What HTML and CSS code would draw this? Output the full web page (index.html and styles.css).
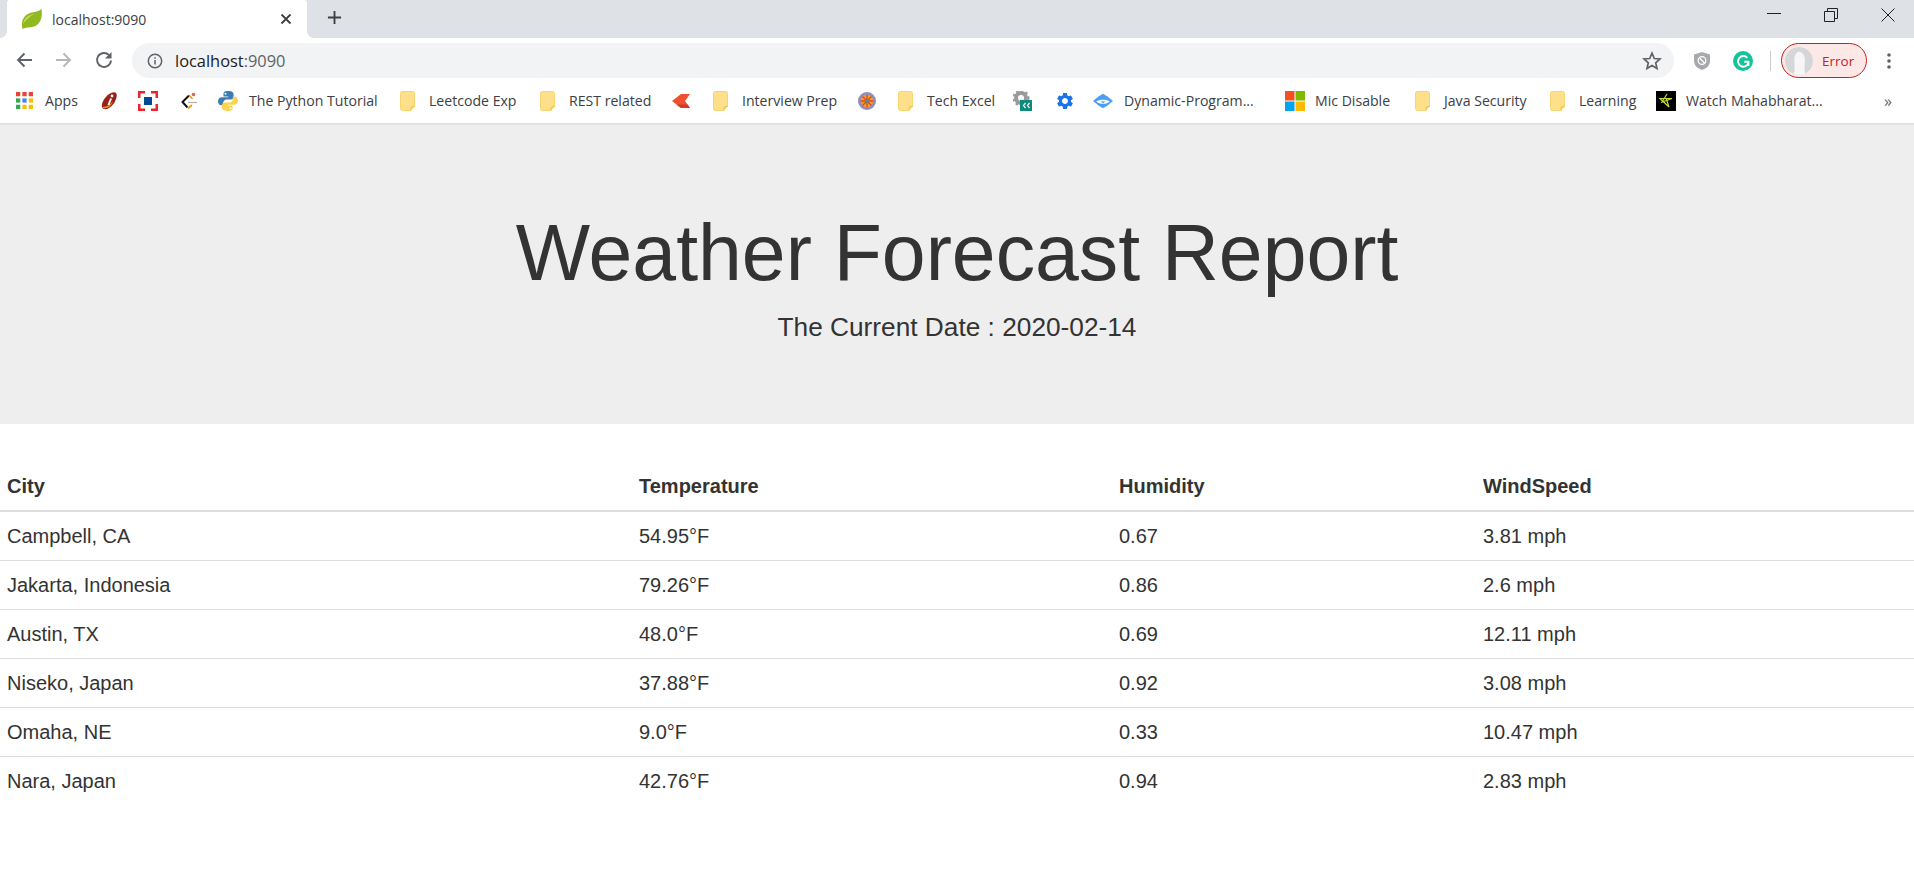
FILE: index.html
```html
<!DOCTYPE html>
<html lang="en">
<head>
<meta charset="utf-8">
<title>localhost:9090</title>
<link rel="stylesheet" href="styles.css">
</head>
<body>
<svg class="defs" aria-hidden="true"><defs><g id="folder-shape"><path d="M2.500.5h10a2 2 0 0 1 2 2v13l-4 4h-8a2 2 0 0 1-2-2v-15a2 2 0 0 1 2-2z" fill="#fee08b" stroke="#f7d470"/><path d="M11 19.500v-3l1-1h2.500" stroke="#eec04e" fill="#fdd663"/></g></defs></svg>
<header class="browser">
  <div class="tabstrip">
    <div class="tab">
      <svg class="favicon" viewBox="0 0 21 20"><path fill="#8fb91f" d="M1.500 20C-1 11 4 5 11 3.500 15 2.700 18.500 2 20.500 0c1.300 8-1 15-7.500 17.500C9 19 5 18 1.500 20z"/><path fill="#c6dc4e" d="M2 15C3 9 7 6 14 4.500 8.500 7.500 5 11 2 15z"/></svg>
      <span class="tab-title">localhost:9090</span>
      <svg class="tab-close" viewBox="0 0 12 12"><path d="M1.500 1.500l9 9m0-9l-9 9" stroke="#3c4043" stroke-width="1.800" fill="none"/></svg>
    </div>
    <svg class="new-tab" viewBox="0 0 16 16"><path d="M8 1v14M1 8h14" stroke="#3c4043" stroke-width="2" fill="none"/></svg>
    <div class="window-controls">
      <svg viewBox="0 0 14 14"><path d="M0 5.500h14" stroke="#222" fill="none"/></svg>
      <svg viewBox="0 0 14 14"><path d="M.5 3.500h10v10H.5zM3.500 3V.5h10v10H11" stroke="#222" fill="none"/></svg>
      <svg viewBox="0 0 14 14"><path d="M.5.500l13 13m0-13l-13 13" stroke="#222" fill="none"/></svg>
    </div>
  </div>
  <div class="toolbar">
    <svg class="nav" viewBox="0 0 18 18"><path d="M17 9H3M9.500 2.500L3 9l6.500 6.500" stroke="#5f6368" stroke-width="1.900" fill="none"/></svg>
    <svg class="nav" viewBox="0 0 18 18"><path d="M1 9h14M8.500 2.500L15 9l-6.500 6.500" stroke="#b4b7bb" stroke-width="1.900" fill="none"/></svg>
    <svg class="nav" viewBox="0 0 18 18"><path d="M16 9.500a7 7 0 1 1-2-5.400" stroke="#5f6368" stroke-width="1.900" fill="none"/><path d="M16.500 1v6.500H10z" fill="#5f6368"/></svg>
    <div class="omnibox">
      <svg class="info" viewBox="0 0 16 16"><circle cx="8" cy="8" r="6.700" stroke="#5f6368" stroke-width="1.500" fill="none"/><path d="M8 7v4.500M8 4.300v1.500" stroke="#5f6368" stroke-width="1.500"/></svg>
      <span class="url">localhost<span class="port">:9090</span></span>
      <svg class="star" viewBox="0 0 20 20"><path d="M10 2.200l2.300 5.300 5.700.5-4.300 3.800 1.300 5.600-5-3-5 3 1.300-5.600L2 8l5.700-.5z" stroke="#5f6368" stroke-width="1.700" fill="none"/></svg>
    </div>
    <svg class="ext shield" viewBox="0 0 18 20"><path d="M9 1l8 2.500V10c0 4.500-3.500 7.500-8 9-4.500-1.500-8-4.500-8-9V3.500z" fill="#a7a9ac"/><circle cx="9" cy="9.500" r="3.800" stroke="#fff" stroke-width="1.300" fill="none"/><path d="M6.500 7l5 5" stroke="#fff" stroke-width="1.300"/></svg>
    <svg class="ext grammarly" viewBox="0 0 20 20"><circle cx="10" cy="10" r="10" fill="#15c39a"/><path d="M14.300 6.800a5.300 5.300 0 1 0 1 5.500M15.500 15v-4.200h-4.300" stroke="#fff" stroke-width="1.900" fill="none"/></svg>
    <div class="divider"></div>
    <div class="profile">
      <span class="avatar"><svg viewBox="0 0 24 24"><circle cx="12" cy="12" r="12" fill="#d5d6d8"/><path d="M7 24c2-4 1-8 1-13 0-4 2-7 4-7s5 2 5 7c0 5-1 9 1 13z" fill="#f6f6f7"/></svg></span>
      <span class="profile-label">Error</span>
    </div>
    <svg class="menu" viewBox="0 0 4 16"><circle cx="2" cy="2" r="1.800"/><circle cx="2" cy="8" r="1.800"/><circle cx="2" cy="14" r="1.800"/></svg>
  </div>
  <nav class="bookmarks">
    <a class="bm w-apps"><svg class="ico" viewBox="0 0 16 16"><rect width="4" height="4" fill="#ea4335"/><rect x="6" width="4" height="4" fill="#ea4335"/><rect x="12" width="4" height="4" fill="#ea4335"/><rect y="6" width="4" height="4" fill="#34a853"/><rect x="6" y="6" width="4" height="4" fill="#4285f4"/><rect x="12" y="6" width="4" height="4" fill="#fbbc05"/><rect y="12" width="4" height="4" fill="#34a853"/><rect x="6" y="12" width="4" height="4" fill="#fbbc05"/><rect x="12" y="12" width="4" height="4" fill="#fbbc05"/></svg><span>Apps</span></a>
    <a class="bm w-icici"><svg class="ico-md" viewBox="0 0 18 18"><path d="M11 1c5-2 7 1 5 6-2 6-7 11-12 10C0 16 2 9 6 5c1-2 3-3 5-4z" fill="#98201a"/><path d="M2 15c1 2 6 2 9-2 1.500-2 2-4 2-4-2 3-6 6-11 6z" fill="#f08a1d"/><path d="M10 6.500L7.500 13h2L12 6.500z" fill="#fff"/><circle cx="12" cy="4" r="1.400" fill="#fff"/></svg></a>
    <a class="bm w-hdfc"><svg class="ico-lg" viewBox="0 0 20 20"><path d="M0 0h7v2.500H2.500V7H0zM13 0h7v7h-2.500V2.500H13zM0 13h2.500v4.500H7V20H0zM17.500 13H20v7h-7v-2.500h4.500z" fill="#ed232a"/><rect x="6" y="6" width="8" height="8" fill="#004c8f"/></svg></a>
    <a class="bm w-c"><svg class="ico-md" viewBox="0 0 18 18"><path d="M9 3.500L2.500 10l5 5.500" stroke="#111" stroke-width="2" fill="none"/><path d="M9 3l3.500 4M8 16.500l4-3.500" stroke="#f09a1a" stroke-width="1.800" fill="none"/><path d="M8 10.500h9" stroke="#b5b5b5" stroke-width="1.300"/><circle cx="13.500" cy="2.500" r="1.800" fill="#d9635f"/></svg></a>
    <a class="bm w-py"><svg class="ico-lg" viewBox="0 0 20 20"><path d="M10 0C6 0 5.500 1.500 5.500 3.500V5.500h4.700v.8H3.500C1.500 6.300 0 8 0 10.300s1.300 4 3.300 4h1.900v-2.600c0-2 1.600-3.300 3.500-3.300h4.300c1.500 0 2.600-1.200 2.600-2.700V3.500C15.600 1.500 14 0 10 0z" fill="#3d7cb0"/><path d="M10 20c4 0 4.500-1.500 4.500-3.500v-2h-4.700v-.8h6.700c2 0 3.500-1.700 3.500-4s-1.300-4-3.300-4h-1.900v2.600c0 2-1.600 3.300-3.500 3.300H6.500c-1.500 0-2.600 1.200-2.600 2.700v2.200C3.900 18.500 6 20 10 20z" fill="#fbd34e"/><circle cx="7.500" cy="2.800" r="1" fill="#fff"/><circle cx="12.500" cy="17.200" r="1" fill="#fff"/></svg><span>The Python Tutorial</span></a>
    <a class="bm w-leet"><svg class="folder" viewBox="0 0 15 20"><use href="#folder-shape"/></svg><span>Leetcode Exp</span></a>
    <a class="bm w-rest"><svg class="folder" viewBox="0 0 15 20"><use href="#folder-shape"/></svg><span>REST related</span></a>
    <a class="bm w-k"><svg class="ico-md" viewBox="0 0 18 14"><path d="M18 0H9L0 7l9 7h9l-5-7z" fill="#f1502f"/><path d="M18 14H9L4.500 10.500H15.500z" fill="#d43a2a"/></svg></a>
    <a class="bm w-prep"><svg class="folder" viewBox="0 0 15 20"><use href="#folder-shape"/></svg><span>Interview Prep</span></a>
    <a class="bm w-wheel"><svg class="ico-md" viewBox="0 0 20 20"><circle cx="10" cy="10" r="8.500" fill="#f0a030" stroke="#8f8cc0" stroke-width="3"/><path d="M10 3v14M3 10h14M5 5l10 10M15 5L5 15" stroke="#d64a2a" stroke-width="1.500"/><circle cx="10" cy="10" r="2" fill="#3f9a96"/></svg></a>
    <a class="bm w-tech"><svg class="folder" viewBox="0 0 15 20"><use href="#folder-shape"/></svg><span>Tech Excel</span></a>
    <a class="bm w-gear"><svg class="ico-lg" viewBox="0 0 20 20"><circle cx="8" cy="7" r="5" fill="none" stroke="#9a9a9a" stroke-width="4"/><circle cx="8" cy="7" r="7.500" fill="none" stroke="#9a9a9a" stroke-width="2" stroke-dasharray="2.500 2.500"/><rect x="7" y="9" width="12" height="11" fill="#0e8a7d"/><path d="M12.500 12l-2 2.500 2 2.500M16.500 12l-2 2.500 2 2.500" stroke="#dff5f0" stroke-width="1.300" fill="none"/></svg></a>
    <a class="bm w-cog"><svg class="ico-lg" viewBox="0 0 24 24"><path fill="#1a73e8" d="M19.140 12.940c.04-.3.060-.61.060-.94 0-.32-.02-.64-.07-.94l2.030-1.580c.18-.14.230-.41.120-.61l-1.920-3.320c-.12-.22-.37-.29-.59-.22l-2.390.960c-.5-.38-1.030-.7-1.620-.94l-.36-2.540c-.04-.24-.24-.41-.48-.41h-3.840c-.24 0-.43.170-.47.410l-.36 2.540c-.59.240-1.130.570-1.620.940l-2.390-.96c-.22-.08-.47 0-.59.220L2.740 8.870c-.12.210-.08.470.120.610l2.030 1.580c-.05.3-.09.630-.09.940s.02.640.070.940l-2.030 1.580c-.18.140-.23.410-.12.610l1.920 3.320c.12.220.37.290.59.220l2.390-.96c.5.380 1.030.7 1.620.94l.36 2.540c.05.240.24.410.48.410h3.840c.24 0 .44-.17.47-.41l.36-2.540c.59-.24 1.130-.56 1.620-.94l2.390.96c.22.080.47 0 .59-.22l1.920-3.320c.12-.22.070-.47-.12-.61l-2.010-1.580zM12 15.600c-1.980 0-3.600-1.620-3.600-3.600s1.620-3.600 3.600-3.600 3.600 1.620 3.600 3.600-1.620 3.600-3.600 3.600z"/></svg></a>
    <a class="bm w-dp"><svg class="ico-lg" viewBox="0 0 22 16"><path d="M11 0l5 3 6 5-6 5-5 3-5-3-6-5 6-5z" fill="#4a9ff5"/><path d="M3.500 8.500C7 6 15 6 18.500 8.500 15 12 7 12 3.500 8.500z" fill="#fff"/><path d="M8 8.500h6l-3 2z" fill="#4a9ff5"/></svg><span>Dynamic-Program...</span></a>
    <a class="bm w-mic"><svg class="ico-xl" viewBox="0 0 20 20"><rect width="9.500" height="9.500" fill="#f25022"/><rect x="10.500" width="9.500" height="9.500" fill="#7fba00"/><rect y="10.500" width="9.500" height="9.500" fill="#00a4ef"/><rect x="10.500" y="10.500" width="9.500" height="9.500" fill="#ffb900"/></svg><span>Mic Disable</span></a>
    <a class="bm w-java"><svg class="folder" viewBox="0 0 15 20"><use href="#folder-shape"/></svg><span>Java Security</span></a>
    <a class="bm w-learn"><svg class="folder" viewBox="0 0 15 20"><use href="#folder-shape"/></svg><span>Learning</span></a>
    <a class="bm w-watch"><svg class="ico-xl" viewBox="0 0 20 20"><rect width="20" height="20" fill="#000"/><path d="M11 3L6 11l10-3.500L4 7.500l9 8.500-3-9" stroke="#c6d92e" stroke-width="1.200" fill="none"/></svg><span>Watch Mahabharat...</span></a>
    <span class="more">»</span>
  </nav>
</header>
<main>
  <section class="jumbotron">
    <h1>Weather Forecast Report</h1>
    <p>The Current Date : 2020-02-14</p>
  </section>
  <table class="forecast">
    <thead>
      <tr><th class="c1">City</th><th class="c2">Temperature</th><th class="c3">Humidity</th><th>WindSpeed</th></tr>
    </thead>
    <tbody>
      <tr><td>Campbell, CA</td><td>54.95°F</td><td>0.67</td><td>3.81 mph</td></tr>
      <tr><td>Jakarta, Indonesia</td><td>79.26°F</td><td>0.86</td><td>2.6 mph</td></tr>
      <tr><td>Austin, TX</td><td>48.0°F</td><td>0.69</td><td>12.11 mph</td></tr>
      <tr><td>Niseko, Japan</td><td>37.88°F</td><td>0.92</td><td>3.08 mph</td></tr>
      <tr><td>Omaha, NE</td><td>9.0°F</td><td>0.33</td><td>10.47 mph</td></tr>
      <tr><td>Nara, Japan</td><td>42.76°F</td><td>0.94</td><td>2.83 mph</td></tr>
    </tbody>
  </table>
</main>
</body>
</html>
```
FILE: styles.css
```css
* { box-sizing: border-box; }
html, body { margin: 0; padding: 0; height: 871px; overflow: hidden; background: #fff; }
body { font-family: "Liberation Sans", Arial, sans-serif; color: #333; }

.browser { height: 125px; background: #fff; border-bottom: 2px solid #dee1e6; }
.defs { position: absolute; width: 0; height: 0; }

.tabstrip { height: 38px; background: #dee1e6; display: flex; align-items: flex-start; padding-left: 7px; }
.tab { position: relative; flex: none; width: 300px; height: 38px; padding: 0 15px 0 14px; background: #fff; border-radius: 3px 3px 0 0; display: flex; align-items: center; font: 14px "Open Sans", "Noto Sans", sans-serif; color: #3c4043; }
.tab::before, .tab::after { content: ""; position: absolute; bottom: 0; width: 8px; height: 8px; }
.tab::before { left: -8px; background: radial-gradient(circle at 0 0, #dee1e6 8px, #fff 8.500px); }
.tab::after { right: -8px; background: radial-gradient(circle at 100% 0, #dee1e6 8px, #fff 8.500px); }
.favicon { width: 21px; height: 20px; margin-right: 10px; flex: none; }
.tab-title { flex: 1; }
.tab-close { width: 12px; height: 12px; flex: none; }
.new-tab { width: 15px; height: 15px; margin: 10px 0 0 20px; flex: none; }
.window-controls { margin-left: auto; display: flex; gap: 43px; padding: 8px 19px 0 0; }
.window-controls svg { width: 14px; height: 14px; }

.toolbar { height: 40px; padding: 5px 0 0 15px; display: flex; align-items: flex-start; }
.nav { width: 18px; height: 18px; margin: 8px 22px 0 0; flex: none; }
.nav + .omnibox { margin-left: -3px; }
.omnibox { width: 1542px; height: 35px; flex: none; background: #f1f3f4; border-radius: 18px; display: flex; align-items: center; padding: 0 12px 0 15px; font: 16.400px "Open Sans", "Noto Sans", sans-serif; color: #202124; }
.info { width: 16px; height: 16px; margin-right: 12px; flex: none; }
.url { flex: 1; }
.port { color: #5f6368; }
.star { width: 20px; height: 20px; flex: none; }
.ext { flex: none; margin-top: 8px; }
.shield { width: 18px; height: 20px; margin-left: 19px; }
.grammarly { width: 20px; height: 20px; margin-left: 22px; }
.divider { width: 1px; height: 20px; flex: none; margin: 8px 10px 0 17px; background: #c8cacd; }
.profile { width: 86px; height: 35px; border: 1.500px solid #c5221f; border-radius: 18px; background: #fce8e6; display: flex; align-items: center; padding-left: 3px; flex: none; }
.avatar { width: 28px; height: 28px; border-radius: 50%; overflow: hidden; display: block; flex: none; }
.avatar svg { width: 28px; height: 28px; display: block; }
.profile-label { font: 13.500px "Open Sans", "Noto Sans", sans-serif; color: #c5221f; margin-left: 9px; }
.menu { width: 4px; height: 16px; margin: 10px 0 0 20px; fill: #5f6368; flex: none; }

.bookmarks { height: 45px; display: flex; align-items: center; padding-left: 16px; font: 14.100px "Open Sans", "Noto Sans", sans-serif; color: #3c4043; white-space: nowrap; }
.bm { display: flex; align-items: center; flex: none; }
.ico { width: 17px; height: 17px; margin-right: 12px; flex: none; }
.ico-md { width: 18px; height: 18px; margin-right: 11px; flex: none; }
.ico-lg { width: 20px; height: 20px; margin-right: 11px; flex: none; }
.ico-xl { width: 20px; height: 20px; margin-right: 10px; flex: none; }
.folder { width: 15px; height: 20px; margin-right: 14px; flex: none; }
.w-apps { width: 84px; }
.w-icici { width: 38px; }
.w-hdfc { width: 42px; }
.w-c { width: 38px; }
.w-py { width: 182px; }
.w-leet { width: 140px; }
.w-rest { width: 132px; }
.w-k { width: 41px; }
.w-prep { width: 145px; }
.w-wheel { width: 40px; }
.w-tech { width: 115px; }
.w-gear { width: 42px; }
.w-cog { width: 38px; }
.w-dp { width: 192px; }
.w-mic { width: 130px; }
.w-java { width: 135px; }
.w-learn { width: 106px; }
.w-watch { width: 228px; }
.more { font-size: 16px; color: #5f6368; }

.jumbotron { height: 299px; background: #eee; display: flex; flex-direction: column; align-items: center; padding-top: 84px; }
.jumbotron h1 { margin: 0; font-size: 78.750px; line-height: 88px; font-weight: 400; color: #333; }
.jumbotron p { margin: 15px 0 0; font-size: 26.250px; line-height: 30px; color: #333; }

.forecast { width: 100%; margin-top: 38px; border-collapse: collapse; table-layout: fixed; font-size: 20px; color: #333; }
.forecast th, .forecast td { padding: 12px 7px; line-height: 24px; text-align: left; }
.forecast th { border-bottom: 2px solid #ddd; font-weight: 700; }
.forecast td { border-top: 1px solid #ddd; }
.forecast tbody tr:first-child td { border-top: 0; }
.c1 { width: 632px; }
.c2 { width: 480px; }
.c3 { width: 364px; }
```
